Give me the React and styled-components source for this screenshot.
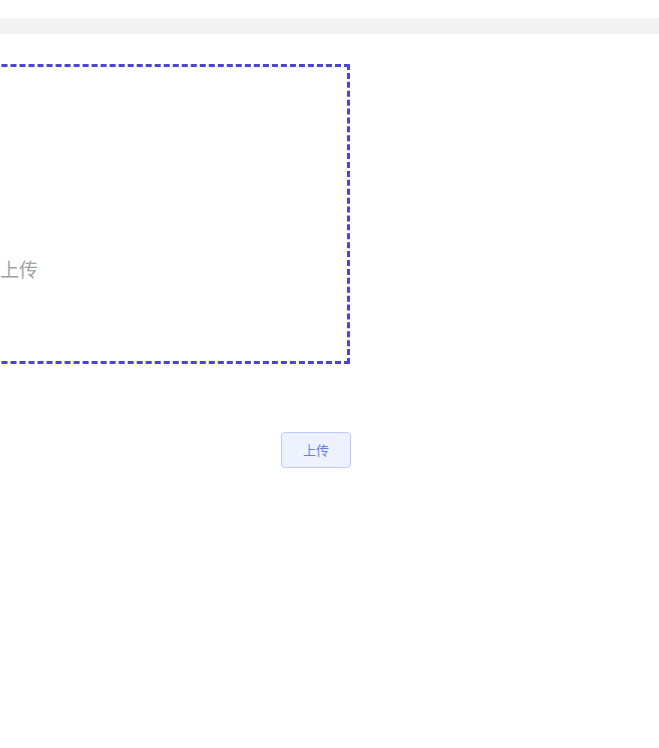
import React from "react";
import styled, {createGlobalStyle} from "styled-components";

const GlobalStyle = createGlobalStyle`
  html, body {
    margin: 0;
    padding: 0;
    background: #fff;
    font-family: "Noto Sans CJK SC", "Liberation Sans", sans-serif;
    overflow: hidden;
  }
`

const Page = styled.div`
  padding-top: 18px;
  width: 659px;
  height: 748px;
  box-sizing: border-box;
`

const TopBar = styled.div`
  height: 16px;
  background: #f2f2f2;
`

const Column = styled.div`
  margin-top: 30px;
  margin-left: -350px;
  width: 701px;
  display: flex;
  flex-direction: column;
`

const DropZone = styled.div`
  box-sizing: border-box;
  width: 700px;
  height: 300px;
  border: 3px dashed #4a44d8;
  display: flex;
  justify-content: center;
  padding-top: 189px;
`

const Hint = styled.span`
  font-size: 19px;
  line-height: 26px;
  color: #a2a2a2;
`

const Actions = styled.div`
  display: flex;
  justify-content: flex-end;
  margin-top: 68px;
`

const Button = styled.button`
  box-sizing: border-box;
  width: 70px;
  height: 36px;
  border: 1px solid #bccafc;
  border-radius: 4px;
  background: #eef2fe;
  color: #6d7cf4;
  font-family: inherit;
  font-size: 13px;
  line-height: 1;
  cursor: pointer;
  padding: 0 0 2px;
`

export default function App() {
  return (
    <>
      <GlobalStyle />
      <Page>
        <TopBar />
        <Column>
          <DropZone>
            <Hint>点击上传</Hint>
          </DropZone>
          <Actions>
            <Button>上传</Button>
          </Actions>
        </Column>
      </Page>
    </>
  )
}
